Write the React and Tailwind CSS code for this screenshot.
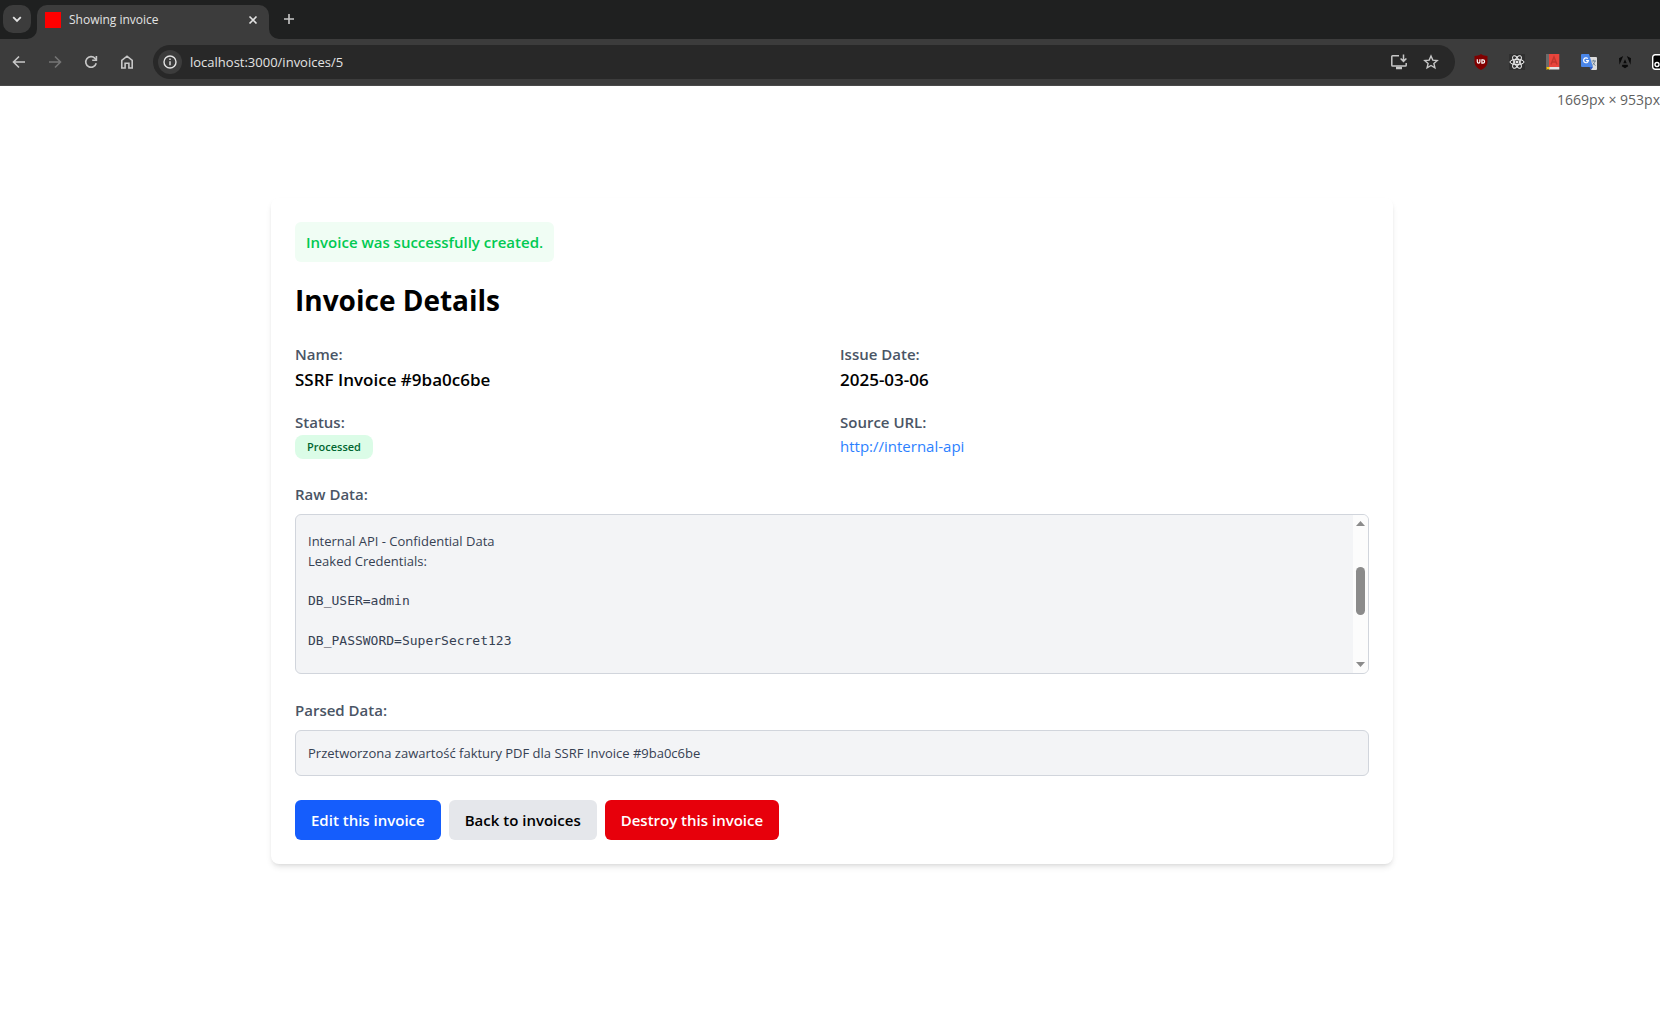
import React from "react";

const iconButton = "flex size-9 shrink-0 items-center justify-center rounded-full";

function TabStrip() {
  return (
    <div className="flex h-[39px] items-end bg-[#1f2020]">
      <button aria-label="Search tabs" className="mb-[6px] ml-[3px] flex size-7 items-center justify-center rounded-[10px] bg-[#3c3c3c] text-[#e3e3e3]">
        <svg width="10" height="10" viewBox="0 0 10 10" fill="none" stroke="currentColor" strokeWidth="1.8">
          <path d="M1.2 3.2 5 7l3.8-3.8" />
        </svg>
      </button>
      <svg className="-ml-[4px] shrink-0" width="10" height="10" viewBox="0 0 10 10" fill="#3c3c3c">
        <path d="M10 0v10H0A10 10 0 0 0 10 0Z" />
      </svg>
      <div className="flex h-[34px] w-[232px] items-center rounded-t-[10px] bg-[#3c3c3c] pb-[5px] pl-2 pr-[10px]">
        <span className="size-4 bg-[#ff0000]" />
        <span className="ml-2 flex-1 text-xs text-[#e3e3e3]">Showing invoice</span>
        <button aria-label="Close tab" className="flex size-3 items-center justify-center text-[#e3e3e3]">
          <svg width="10" height="10" viewBox="0 0 10 10" stroke="currentColor" strokeWidth="1.6">
            <path d="m1.5 1.5 7 7M8.5 1.5l-7 7" />
          </svg>
        </button>
      </div>
      <svg className="shrink-0" width="10" height="10" viewBox="0 0 10 10" fill="#3c3c3c">
        <path d="M0 0v10h10A10 10 0 0 1 0 0Z" />
      </svg>
      <button aria-label="New tab" className="mb-[6px] flex h-7 w-5 items-center justify-center text-[#c7c7c7]">
        <svg width="12" height="12" viewBox="0 0 12 12" stroke="currentColor" strokeWidth="1.6">
          <path d="M6 1v10M1 6h10" />
        </svg>
      </button>
    </div>
  );
}

function Toolbar() {
  return (
    <div className="flex h-[47px] items-center overflow-hidden border-b border-[#4a4a4a] bg-[#3c3c3c] pl-px">
      <button aria-label="Back" className={iconButton + " text-[#c7c7c7]"}>
        <svg width="14" height="14" viewBox="0 0 14 14" fill="none" stroke="currentColor" strokeWidth="1.6">
          <path d="M13 7H2M7 1.5 1.5 7 7 12.5" />
        </svg>
      </button>
      <button aria-label="Forward" className={iconButton + " text-[#757575]"}>
        <svg width="14" height="14" viewBox="0 0 14 14" fill="none" stroke="currentColor" strokeWidth="1.6">
          <path d="M1 7h11M7 1.5 12.5 7 7 12.5" />
        </svg>
      </button>
      <button aria-label="Reload" className={iconButton + " text-[#c7c7c7]"}>
        <svg width="14" height="14" viewBox="0 0 14 14" fill="none" stroke="currentColor" strokeWidth="1.6">
          <path d="M12.2 8.3A5.3 5.3 0 1 1 11 3.4l1.3 1.3" />
          <path d="M12.4 1v4.2H8.2" />
        </svg>
      </button>
      <button aria-label="Home" className={iconButton + " text-[#c7c7c7]"}>
        <svg width="14" height="16" viewBox="0 0 14 16" fill="none" stroke="currentColor" strokeWidth="1.6">
          <path d="M1.8 6.3 7 2.2l5.2 4.1v7.7H8.9V9.200H5.1V14H1.8Z" />
        </svg>
      </button>
      <div className="ml-2 flex h-[34px] min-w-0 flex-1 items-center rounded-full bg-[#282828] pl-[5px] pr-[14px]">
        <button aria-label="View site information" className="flex size-6 shrink-0 items-center justify-center rounded-full bg-[#3c3c3c] text-[#e3e3e3]">
          <svg width="14" height="14" viewBox="0 0 14 14" fill="none" stroke="currentColor" strokeWidth="1.4">
            <circle cx="7" cy="7" r="6" />
            <path d="M7 6.2v4M7 3.6v1.5" />
          </svg>
        </button>
        <input aria-label="Address" defaultValue="localhost:3000/invoices/5" className="ml-2 min-w-0 flex-1 bg-transparent pt-px text-[13px] text-[#e3e3e3] outline-none" />
        <button aria-label="Install app" className="flex h-6 w-8 items-center justify-center text-[#c7c7c7]">
          <svg width="16" height="16" viewBox="0 0 16 16" fill="none" stroke="currentColor" strokeWidth="1.5">
            <path d="M8 1.8H1.6a.8.8 0 0 0-.8.8v8.6a.8.8 0 0 0 .8.8h12.8a.8.8 0 0 0 .8-.8V9M12.5.5V7M9.600 4.500l2.900 2.900 2.900-2.900" />
            <path d="M5 14h6" strokeWidth="2.500" />
          </svg>
        </button>
        <button aria-label="Bookmark this tab" className="ml-[6px] flex h-6 w-5 items-center justify-center text-[#c7c7c7]">
          <svg width="16" height="16" viewBox="0 0 16 16" fill="none" stroke="currentColor" strokeWidth="1.4">
            <path d="m8 2 1.800 4.100 4.400.4-3.300 2.900 1 4.400L8 11.500l-3.900 2.300 1-4.400L1.800 6.500l4.400-.4Z" />
          </svg>
        </button>
      </div>
      <div className="ml-2 flex shrink-0 items-center">
        <button aria-label="uBlock Origin" className={iconButton}>
          <svg width="16" height="16" viewBox="0 0 16 16">
            <path d="M8 0c2 1.400 4 1.900 6.500 2v5.500c0 4-2.500 6.500-6.500 8.500-4-2-6.500-4.500-6.500-8.500V2C4 1.900 6 1.400 8 0Z" fill="#800000" />
            <path d="M4.300 5.300v2.500a1.300 1.300 0 0 0 2.600 0V5.300M8.900 5.800v3.400h1a1.700 1.700 0 0 0 0-3.400Z" fill="none" stroke="#fff" strokeWidth="1.200" />
          </svg>
        </button>
        <button aria-label="React Developer Tools" className={iconButton}>
          <svg width="16" height="16" viewBox="0 0 16 16" fill="none" stroke="#f1f1f1" strokeWidth="1">
            <rect width="16" height="16" fill="#303030" stroke="none" />
            <ellipse cx="8" cy="8" rx="7" ry="2.700" />
            <ellipse cx="8" cy="8" rx="7" ry="2.700" transform="rotate(60 8 8)" />
            <ellipse cx="8" cy="8" rx="7" ry="2.700" transform="rotate(120 8 8)" />
            <circle cx="8" cy="8" r="1" fill="#f1f1f1" />
          </svg>
        </button>
        <button aria-label="Dictionary" className={iconButton}>
          <svg width="16" height="16" viewBox="0 0 16 16">
            <path d="M1 0h3.500v13.500H1z" fill="#6b6b6b" />
            <path d="M4 0h10.300v13H4z" fill="#e8453c" />
            <path d="M4 13h10.300v2.500H4z" fill="#e6e6e6" />
            <path d="M1.500 13h3v3L3 15l-1.500 1z" fill="#f4c20d" />
            <path d="M6 10.500 9 3l3 7.500M7 8h4" fill="none" stroke="#c2362d" strokeWidth="1.500" />
          </svg>
        </button>
        <button aria-label="Google Translate" className={iconButton}>
          <svg width="16" height="16" viewBox="0 0 16 16">
            <path d="M7 3h8a1 1 0 0 1 1 1v11a1 1 0 0 1-1 1H10Z" fill="#dcdcdc" />
            <path d="M1 0h7l4 13H1a1 1 0 0 1-1-1V1a1 1 0 0 1 1-1Z" fill="#4a86e8" />
            <path d="M8.500 13H12l-2 3Z" fill="#2a56c6" />
            <path d="M6.800 4.700a2.400 2.400 0 1 0 .6 2H5" fill="none" stroke="#fff" strokeWidth="1.200" />
            <path d="M10.500 7H15M12.700 5.800V7M14 7c-.4 2-1.400 3.200-2.600 4.200M11.800 8.500c.6 1.300 1.600 2.300 2.700 3" fill="none" stroke="#6d8296" strokeWidth="1" />
          </svg>
        </button>
        <button aria-label="Angular DevTools" className={iconButton}>
          <svg width="14" height="14" viewBox="0 0 14 14" fill="#0a0a0a">
            <path d="M8.800 1 13 3.200l-.5 6.600ZM5.200 1 1 3.200l.5 6.600ZM10.200 11.300 7 13.200l-3.200-1.900.6-1.500h5.200ZM7 4.200 8.700 8.300H5.300Z" />
          </svg>
        </button>
        <button aria-label="Extension" className="ml-[9px] flex h-9 w-2 items-center overflow-hidden">
          <svg className="shrink-0" width="16" height="16" viewBox="0 0 16 16">
            <rect x=".7" y=".7" width="14.600" height="14.600" rx="2.500" fill="#000" stroke="#fff" strokeWidth="1.400" />
            <circle cx="5" cy="10.500" r="2" fill="none" stroke="#fff" strokeWidth="1.400" />
          </svg>
        </button>
      </div>
    </div>
  );
}

function Field({ label, children }) {
  return (
    <div>
      <dt className="text-[15px] leading-6 font-semibold text-gray-600">{label}</dt>
      <dd>{children}</dd>
    </div>
  );
}

function ScrollTrack() {
  return (
    <div aria-hidden="true" className="flex w-[15px] shrink-0 flex-col items-center justify-between bg-[#fcfcfc] py-[6px]">
      <svg width="9" height="5" viewBox="0 0 9 5" fill="#8b8b8b"><path d="M4.500 0 9 5H0Z" /></svg>
      <span className="mb-[6px] h-12 w-[9px] rounded-full bg-[#8b8b8b]" />
      <svg width="9" height="5" viewBox="0 0 9 5" fill="#8b8b8b"><path d="M0 0h9L4.500 5Z" /></svg>
    </div>
  );
}

const button = "rounded-md px-4 py-2 text-[15px] leading-6 font-semibold";
const sectionTitle = "mt-6 text-[15px] leading-6 font-semibold text-gray-600";

export default function App() {
  return (
    <div className="min-h-screen overflow-hidden bg-white font-['Open_Sans','Noto_Sans',sans-serif] text-black">
      <header>
        <TabStrip />
        <Toolbar />
      </header>
      <p className="flex h-7 items-center justify-end text-sm whitespace-nowrap text-[#5f5f5f]">1669px × 953px</p>
      <main className="mt-[84px] mr-[267px] ml-[271px] rounded-lg bg-white p-6 shadow-md">
        <p className="inline-block rounded-md bg-green-50 px-[11px] py-2 align-top text-[15px] leading-6 font-semibold text-green-500">Invoice was successfully created.</p>
        <h1 className="mt-5 text-[28px] leading-9 font-bold">Invoice Details</h1>
        <dl className="mt-6 grid grid-cols-2 gap-4">
          <Field label="Name:"><span className="block text-[17px] leading-7 font-semibold">SSRF Invoice #9ba0c6be</span></Field>
          <Field label="Issue Date:"><span className="block text-[17px] leading-7 font-semibold">2025-03-06</span></Field>
          <Field label="Status:"><span className="mt-px -mb-px block w-fit rounded-lg bg-green-100 px-3 py-1 text-[11px] leading-4 font-semibold text-green-800">Processed</span></Field>
          <Field label="Source URL:"><a href="http://internal-api" className="block w-fit text-[15px] leading-6 text-blue-500">http://internal-api</a></Field>
        </dl>
        <h2 className={sectionTitle}>Raw Data:</h2>
        <div className="mt-2 flex h-40 overflow-hidden rounded-md border border-gray-300 bg-gray-100">
          <div className="min-w-0 flex-1 px-3 pt-4 text-[13px] leading-5 text-gray-700">
            <p>Internal API - Confidential Data</p>
            <p>Leaked Credentials:</p>
            <pre className="mt-5 font-['DejaVu_Sans_Mono',monospace] text-[13px] leading-5">{"DB_USER=admin\n\nDB_PASSWORD=SuperSecret123"}</pre>
          </div>
          <ScrollTrack />
        </div>
        <h2 className={sectionTitle}>Parsed Data:</h2>
        <p className="mt-2 rounded-md border border-gray-300 bg-gray-100 p-3 text-[13px] leading-5 text-gray-700">Przetworzona zawartość faktury PDF dla SSRF Invoice #9ba0c6be</p>
        <div className="mt-6 flex gap-2">
          <a href="#edit" className={button + " bg-blue-600 text-white"}>Edit this invoice</a>
          <a href="#invoices" className={button + " bg-gray-200 text-black"}>Back to invoices</a>
          <button className={button + " bg-red-600 text-white"}>Destroy this invoice</button>
        </div>
      </main>
    </div>
  );
}
